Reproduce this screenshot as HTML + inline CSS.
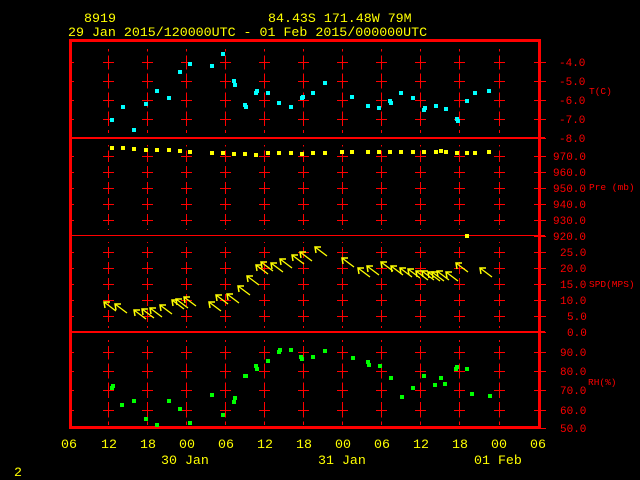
<!DOCTYPE html>
<html><head><style>
html,body{margin:0;padding:0;background:#000;width:640px;height:480px;overflow:hidden}
svg{display:block}
text{font-family:"Liberation Mono",monospace}
</style></head><body>
<svg id="s" width="640" height="480" xmlns="http://www.w3.org/2000/svg" shape-rendering="crispEdges">
<rect width="640" height="480" fill="#000"/>
<g fill="#ffff00" font-size="13.3">
<text x="84" y="22">8919</text>
<text x="268" y="22">84.43S  171.48W   79M</text>
<text x="68" y="36">29 Jan 2015/120000UTC - 01 Feb 2015/000000UTC</text>
<text x="61" y="448">06</text><text x="101" y="448">12</text><text x="140" y="448">18</text><text x="179" y="448">00</text><text x="218" y="448">06</text><text x="257" y="448">12</text><text x="296" y="448">18</text><text x="335" y="448">00</text><text x="374" y="448">06</text><text x="413" y="448">12</text><text x="452" y="448">18</text><text x="491" y="448">00</text><text x="530" y="448">06</text>
<text x="161" y="464">30 Jan</text><text x="318" y="464">31 Jan</text><text x="474" y="464">01 Feb</text>
<text x="14" y="476">2</text>
</g>
<g fill="#ff0000" font-size="11">
<text x="559" y="66">-4.0</text><text x="559" y="85">-5.0</text><text x="559" y="104">-6.0</text><text x="559" y="123">-7.0</text><text x="559" y="142">-8.0</text>
<text x="553" y="160">970.0</text><text x="553" y="176">960.0</text><text x="553" y="192">950.0</text><text x="553" y="208">940.0</text><text x="553" y="224">930.0</text><text x="553" y="240">920.0</text>
<text x="560" y="256">25.0</text><text x="560" y="272">20.0</text><text x="560" y="288">15.0</text><text x="560" y="304">10.0</text><text x="567" y="320">5.0</text><text x="567" y="336">0.0</text>
<text x="560" y="356">90.0</text><text x="560" y="375">80.0</text><text x="560" y="394">70.0</text><text x="560" y="414">60.0</text><text x="560" y="432">50.0</text>
</g>
<g fill="#ff0000" font-size="9.5">
<text x="589" y="94">T(C)</text><text x="589" y="190">Pre (mb)</text><text x="589" y="287">SPD(MPS)</text><text x="588" y="385">RH(%)</text>
</g>
<g id="grid" stroke="#ff0000" stroke-width="1" fill="none"></g>
<rect x="70.5" y="40.5" width="469" height="387" fill="none" stroke="#ff0000" stroke-width="3"/>
<g id="data" shape-rendering="auto"></g>
</svg>
<script>
var NS="http://www.w3.org/2000/svg";
function el(p,t,a){var e=document.createElementNS(NS,t);for(var k in a)e.setAttribute(k,a[k]);p.appendChild(e);return e;}
var g=document.getElementById('grid'),d=document.getElementById('data');
var cols=[108,147,186,225,264,303,342,381,420,459,499];
el(g,'line',{x1:70,y1:138,x2:545,y2:138,"stroke-width":2});
el(g,'line',{x1:70,y1:235.5,x2:545,y2:235.5});
el(g,'line',{x1:70,y1:332,x2:545,y2:332,"stroke-width":2});
var secs=[[49,133,[62,81,100,119]],[145,230,[156,172,188,204,220]],[242,328,[252,268,284,300,316]],[340,425,[352,371,390,410]]];
cols.forEach(function(x){
 secs.forEach(function(s){
  var ys=s[2];
  var pts=[s[0]-4].concat(ys).concat([s[1]+4]);
  for(var i=0;i<pts.length-1;i++){
   var a=pts[i],b=pts[i+1],m=(a+b)/2;
   el(g,'line',{x1:x+.5,y1:(i==0?s[0]:a),x2:x+.5,y2:m-2});
   el(g,'line',{x1:x+.5,y1:m+2,x2:x+.5,y2:(i==pts.length-2?s[1]:b)});
  }
  ys.forEach(function(y){el(g,'line',{x1:x-5,y1:y+.5,x2:x+6,y2:y+.5});});
 });
});
[62,81,100,119,138,156,172,188,204,220,236,252,268,284,300,316,332,352,371,390,410,428].forEach(function(y){el(g,'line',{x1:534,y1:y+.5,x2:546,y2:y+.5});});
[62,81,100,119,156,172,188,204,220,252,268,284,300,316,352,371,390,410].forEach(function(y){el(g,'line',{x1:70,y1:y+.5,x2:74,y2:y+.5});});
function sq(list,c){list.forEach(function(p){el(d,'rect',{x:Math.round(p[0]-2),y:Math.round(p[1]-2),width:4,height:4,fill:c});});}
sq([[112,120],[123,107],[134,130],[146,104],[157,91],[169,98],[180,72],[190,64],[212,66],[223,54],[234,81],[235,85],[245,105],[246,107],[256,93],[257,91],[268,93],[279,103],[291,107],[302,98],[303,97],[313,93],[325,83],[352,97],[368,106],[379,108],[390,101],[391,103],[401,93],[413,98],[424,110],[425,108],[436,106],[446,109],[457,119],[458,121],[467,101],[475,93],[489,91]],'#00ffff');
var pr=[[112,148],[123,148],[134,149],[146,150],[157,150],[169,150],[180,151],[190,152],[212,153],[223,153],[234,154],[245,154],[256,155],[268,153],[279,153],[291,153],[302,154],[313,153],[325,153],[342,152],[352,152],[368,152],[379,152],[390,152],[401,152],[413,152],[424,152],[436,152],[441,151],[446,152],[457,153],[467,153],[475,153],[489,152],[467,236]];
sq(pr,'#ffff00');
sq([[112,403],[113,401],[122,424],[134,419],[146,441],[157,448],[169,419],[180,429],[190,446],[212,412],[223,436],[234,421],[235,415],[245,389],[246,388],[256,376],[257,380],[268,370],[279,359],[280,357],[291,357],[301,365],[302,368],[313,365],[325,358],[353,367],[368,372],[369,375],[380,376],[391,391],[402,414],[413,403],[424,388],[435,399],[441,391],[445,398],[456,380],[457,377],[467,380],[472,410],[490,413]].map(function(p){return [p[0],320+(p[1]-320)*0.8167];}),'#00ff00');
var ar=[[104,302],[115,304],[134,310],[142,309],[150,308],[160,305],[172,300],[176,299],[184,297],[209,302],[216,295],[227,294],[238,286],[247,276],[256,265],[261,262],[271,263],[280,259],[292,255],[300,252],[315,247],[342,258],[358,268],[367,266],[381,262],[391,266],[400,268],[408,269],[416,271],[422,271],[428,272],[432,272],[437,271],[446,272],[456,263],[480,268]];
ar.forEach(function(a){var x=a[0],y=a[1];
 el(d,'line',{x1:x,y1:y,x2:x+12,y2:y+9,stroke:'#ffff00','stroke-width':1.3});
 el(d,'polyline',{points:(x+6)+','+(y)+' '+x+','+y+' '+(x+1)+','+(y+6),stroke:'#ffff00','stroke-width':1.5,fill:'none'});
});
</script>
</body></html>
